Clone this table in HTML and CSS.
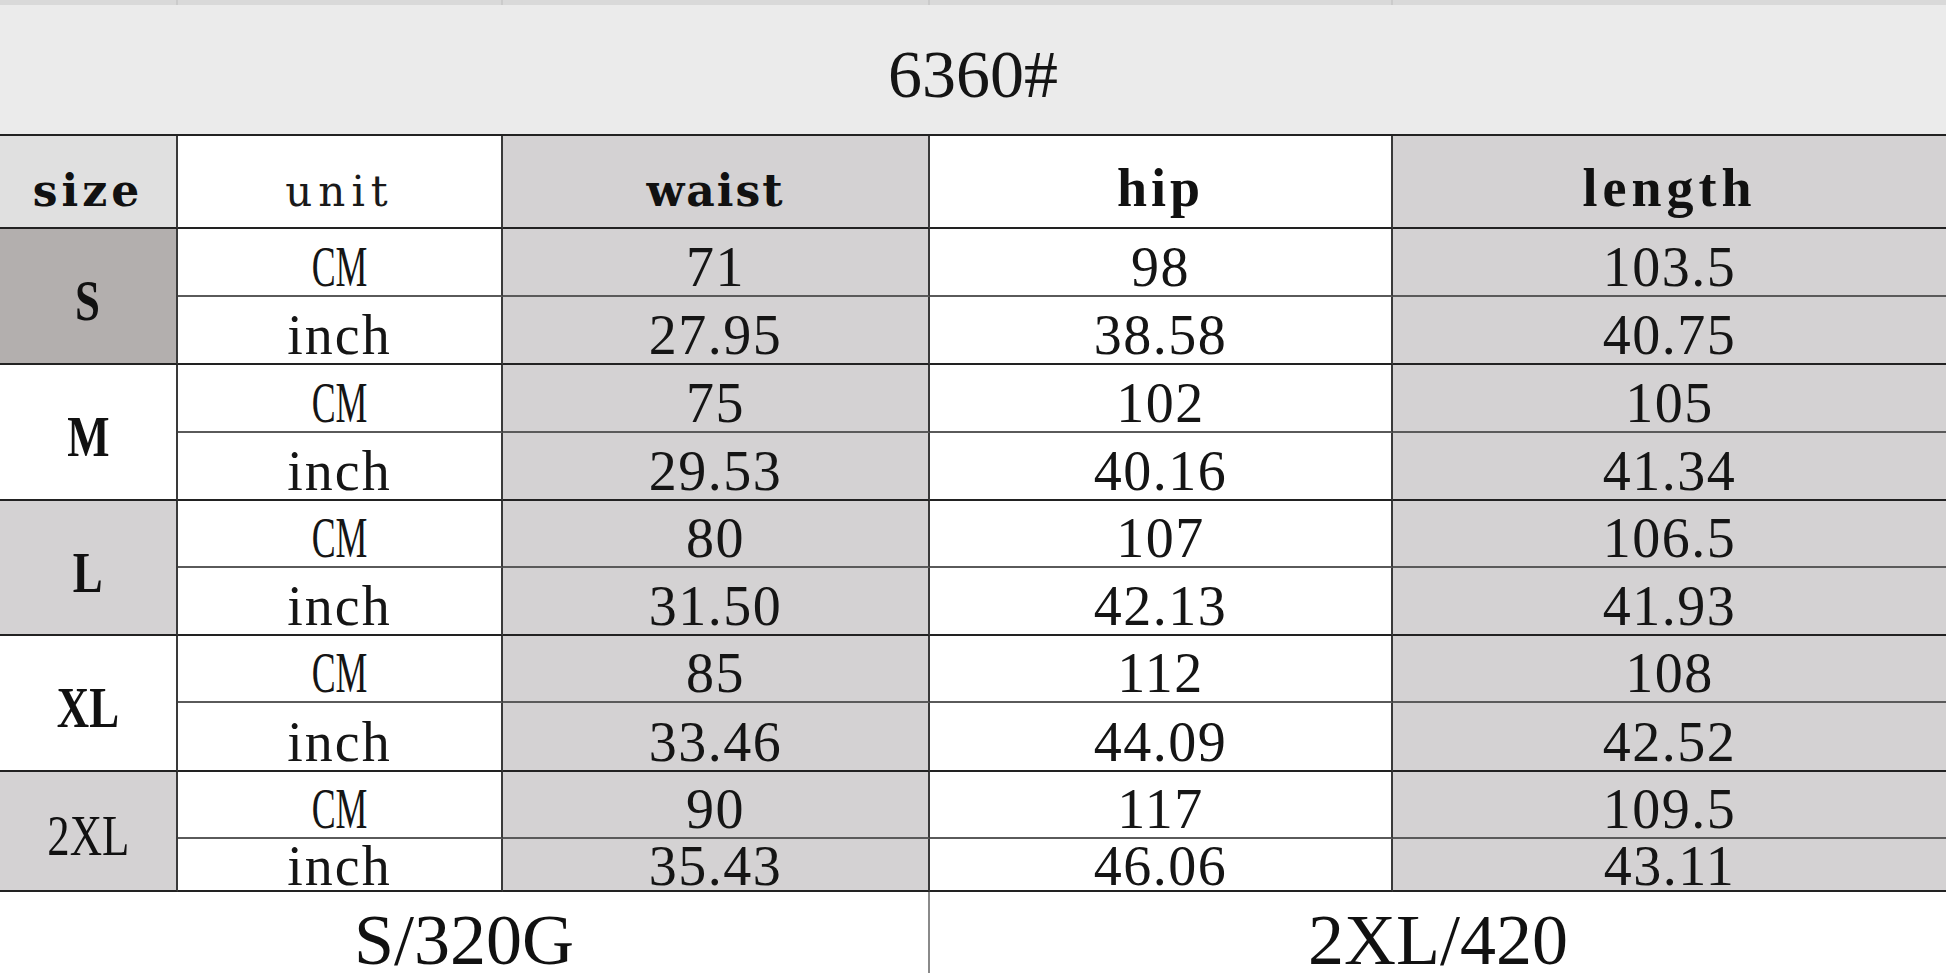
FILE: index.html
```html
<!DOCTYPE html>
<html lang="en">
<head>
<meta charset="utf-8">
<title>6360# size chart</title>
<link rel="stylesheet" href="styles.css">
</head>
<body>
<div class="sheet">
  <div class="strip"></div><div class="strip"></div><div class="strip"></div><div class="strip"></div><div class="strip last-col"></div>

  <div class="title"><span>6360#</span></div>

  <div class="hd hd-size"><span>size</span></div>
  <div class="hd hd-unit"><span>unit</span></div>
  <div class="hd hd-waist g"><span>waist</span></div>
  <div class="hd hd-hip"><span>hip</span></div>
  <div class="hd hd-len g last-col"><span>length</span></div>

  <div class="sz sz-s bold"><span class="sq">S</span></div>
  <div class="c sub"><span class="sq-cm">CM</span></div>
  <div class="c sub g"><span>71</span></div>
  <div class="c sub"><span>98</span></div>
  <div class="c sub g last-col"><span>103.5</span></div>
  <div class="c grp"><span class="inch">inch</span></div>
  <div class="c grp g"><span>27.95</span></div>
  <div class="c grp"><span>38.58</span></div>
  <div class="c grp g last-col"><span>40.75</span></div>

  <div class="sz bold"><span class="sq">M</span></div>
  <div class="c sub"><span class="sq-cm">CM</span></div>
  <div class="c sub g"><span>75</span></div>
  <div class="c sub"><span>102</span></div>
  <div class="c sub g last-col"><span>105</span></div>
  <div class="c grp"><span class="inch">inch</span></div>
  <div class="c grp g"><span>29.53</span></div>
  <div class="c grp"><span>40.16</span></div>
  <div class="c grp g last-col"><span>41.34</span></div>

  <div class="sz sz-lt bold"><span class="sq">L</span></div>
  <div class="c sub"><span class="sq-cm">CM</span></div>
  <div class="c sub g"><span>80</span></div>
  <div class="c sub"><span>107</span></div>
  <div class="c sub g last-col"><span>106.5</span></div>
  <div class="c grp"><span class="inch">inch</span></div>
  <div class="c grp g"><span>31.50</span></div>
  <div class="c grp"><span>42.13</span></div>
  <div class="c grp g last-col"><span>41.93</span></div>

  <div class="sz bold"><span class="sq">XL</span></div>
  <div class="c sub"><span class="sq-cm">CM</span></div>
  <div class="c sub g"><span>85</span></div>
  <div class="c sub"><span>112</span></div>
  <div class="c sub g last-col"><span>108</span></div>
  <div class="c grp"><span class="inch">inch</span></div>
  <div class="c grp g"><span>33.46</span></div>
  <div class="c grp"><span>44.09</span></div>
  <div class="c grp g last-col"><span>42.52</span></div>

  <div class="sz sz-lt"><span class="sq">2XL</span></div>
  <div class="c sub"><span class="sq-cm">CM</span></div>
  <div class="c sub g"><span>90</span></div>
  <div class="c sub"><span>117</span></div>
  <div class="c sub g last-col"><span>109.5</span></div>
  <div class="c grp end"><span class="inch">inch</span></div>
  <div class="c grp end g"><span>35.43</span></div>
  <div class="c grp end"><span>46.06</span></div>
  <div class="c grp end g last-col"><span>43.11</span></div>

  <div class="ft ft-left"><span>S/320G</span></div>
  <div class="ft ft-right"><span>2XL/420</span></div>
</div>
</body>
</html>
```

FILE: styles.css
```css
html, body {
  margin: 0;
  padding: 0;
  background: #ffffff;
}

body {
  width: 1946px;
  height: 973px;
  overflow: hidden;
  font-family: "Liberation Serif", "Times New Roman", serif;
  color: #111111;
}

.sheet {
  display: grid;
  grid-template-columns: 178px 325px 427px 463px 553px;
  grid-template-rows: 5px 131px 93px 68px 68px 68px 68px 67px 68px 67px 69px 67px 53px 81px;
  width: 1946px;
  height: 973px;
}

.sheet > div {
  box-sizing: border-box;
  display: flex;
  justify-content: center;
  min-width: 0;
}

.sheet span {
  display: inline-block;
  line-height: 1;
  white-space: nowrap;
}

/* faint strip of the previous table */
.strip {
  background: #d9d9d9;
  border-right: 2px solid #cbcbcb;
}

.last-col {
  border-right: none !important;
}

/* title band */
.title {
  grid-column: 1 / -1;
  background: #ebebeb;
  border-bottom: 2px solid #222222;
  align-items: center;
  padding-top: 9px;
  font-size: 68px;
  color: #151515;
}

/* header row */
.hd {
  align-items: flex-end;
  border-right: 2px solid #3a3a3a;
  border-bottom: 2px solid #222222;
  background: #ffffff;
}

.hd-size,
.hd-waist {
  font-family: "DejaVu Serif", "Liberation Serif", serif;
  font-weight: bold;
  font-size: 44px;
  letter-spacing: 4px;
  padding-bottom: 14px;
}

.hd-waist {
  letter-spacing: 2px;
}

.hd-size {
  background: #e0e0e0;
}

.hd-unit {
  font-family: "DejaVu Serif", "Liberation Serif", serif;
  font-size: 42px;
  letter-spacing: 6px;
  padding-bottom: 14px;
  color: #1a1a1a;
}

.hd-hip,
.hd-len {
  font-weight: bold;
  font-size: 54px;
  letter-spacing: 4px;
  padding-bottom: 12px;
}

.hd-len {
  letter-spacing: 5px;
}

/* column shading */
.g {
  background: #d4d2d3;
}

/* size labels */
.sz {
  grid-row: span 2;
  align-items: center;
  padding-top: 10px;
  border-right: 2px solid #3a3a3a;
  border-bottom: 2px solid #222222;
  background: #ffffff;
  font-size: 56px;
}

.sz.bold {
  font-weight: bold;
}

.sz-s {
  background: #b3afae;
}

.sz-lt {
  background: #d4d2d3;
}

.sq {
  transform: scaleX(0.8);
}

/* data cells */
.c {
  align-items: flex-end;
  border-right: 2px solid #3a3a3a;
  font-size: 56px;
  letter-spacing: 1.5px;
  color: #151515;
}

.sub {
  border-bottom: 2px solid #5a5a5a;
}

.grp {
  border-bottom: 2px solid #222222;
}

.sheet .end span {
  line-height: 0.82;
}

.sq-cm {
  letter-spacing: 0;
  transform: scaleX(0.64);
}

.c .inch {
  letter-spacing: 2px;
}

/* footer */
.ft {
  align-items: flex-start;
  padding-top: 18px;
  font-size: 72px;
  background: #ffffff;
  color: #111111;
}

.sheet .ft span {
  line-height: 0.85;
}

.ft-left {
  grid-column: span 3;
  border-right: 2px solid #8a8a8a;
}

.ft-right {
  grid-column: span 2;
}
```
